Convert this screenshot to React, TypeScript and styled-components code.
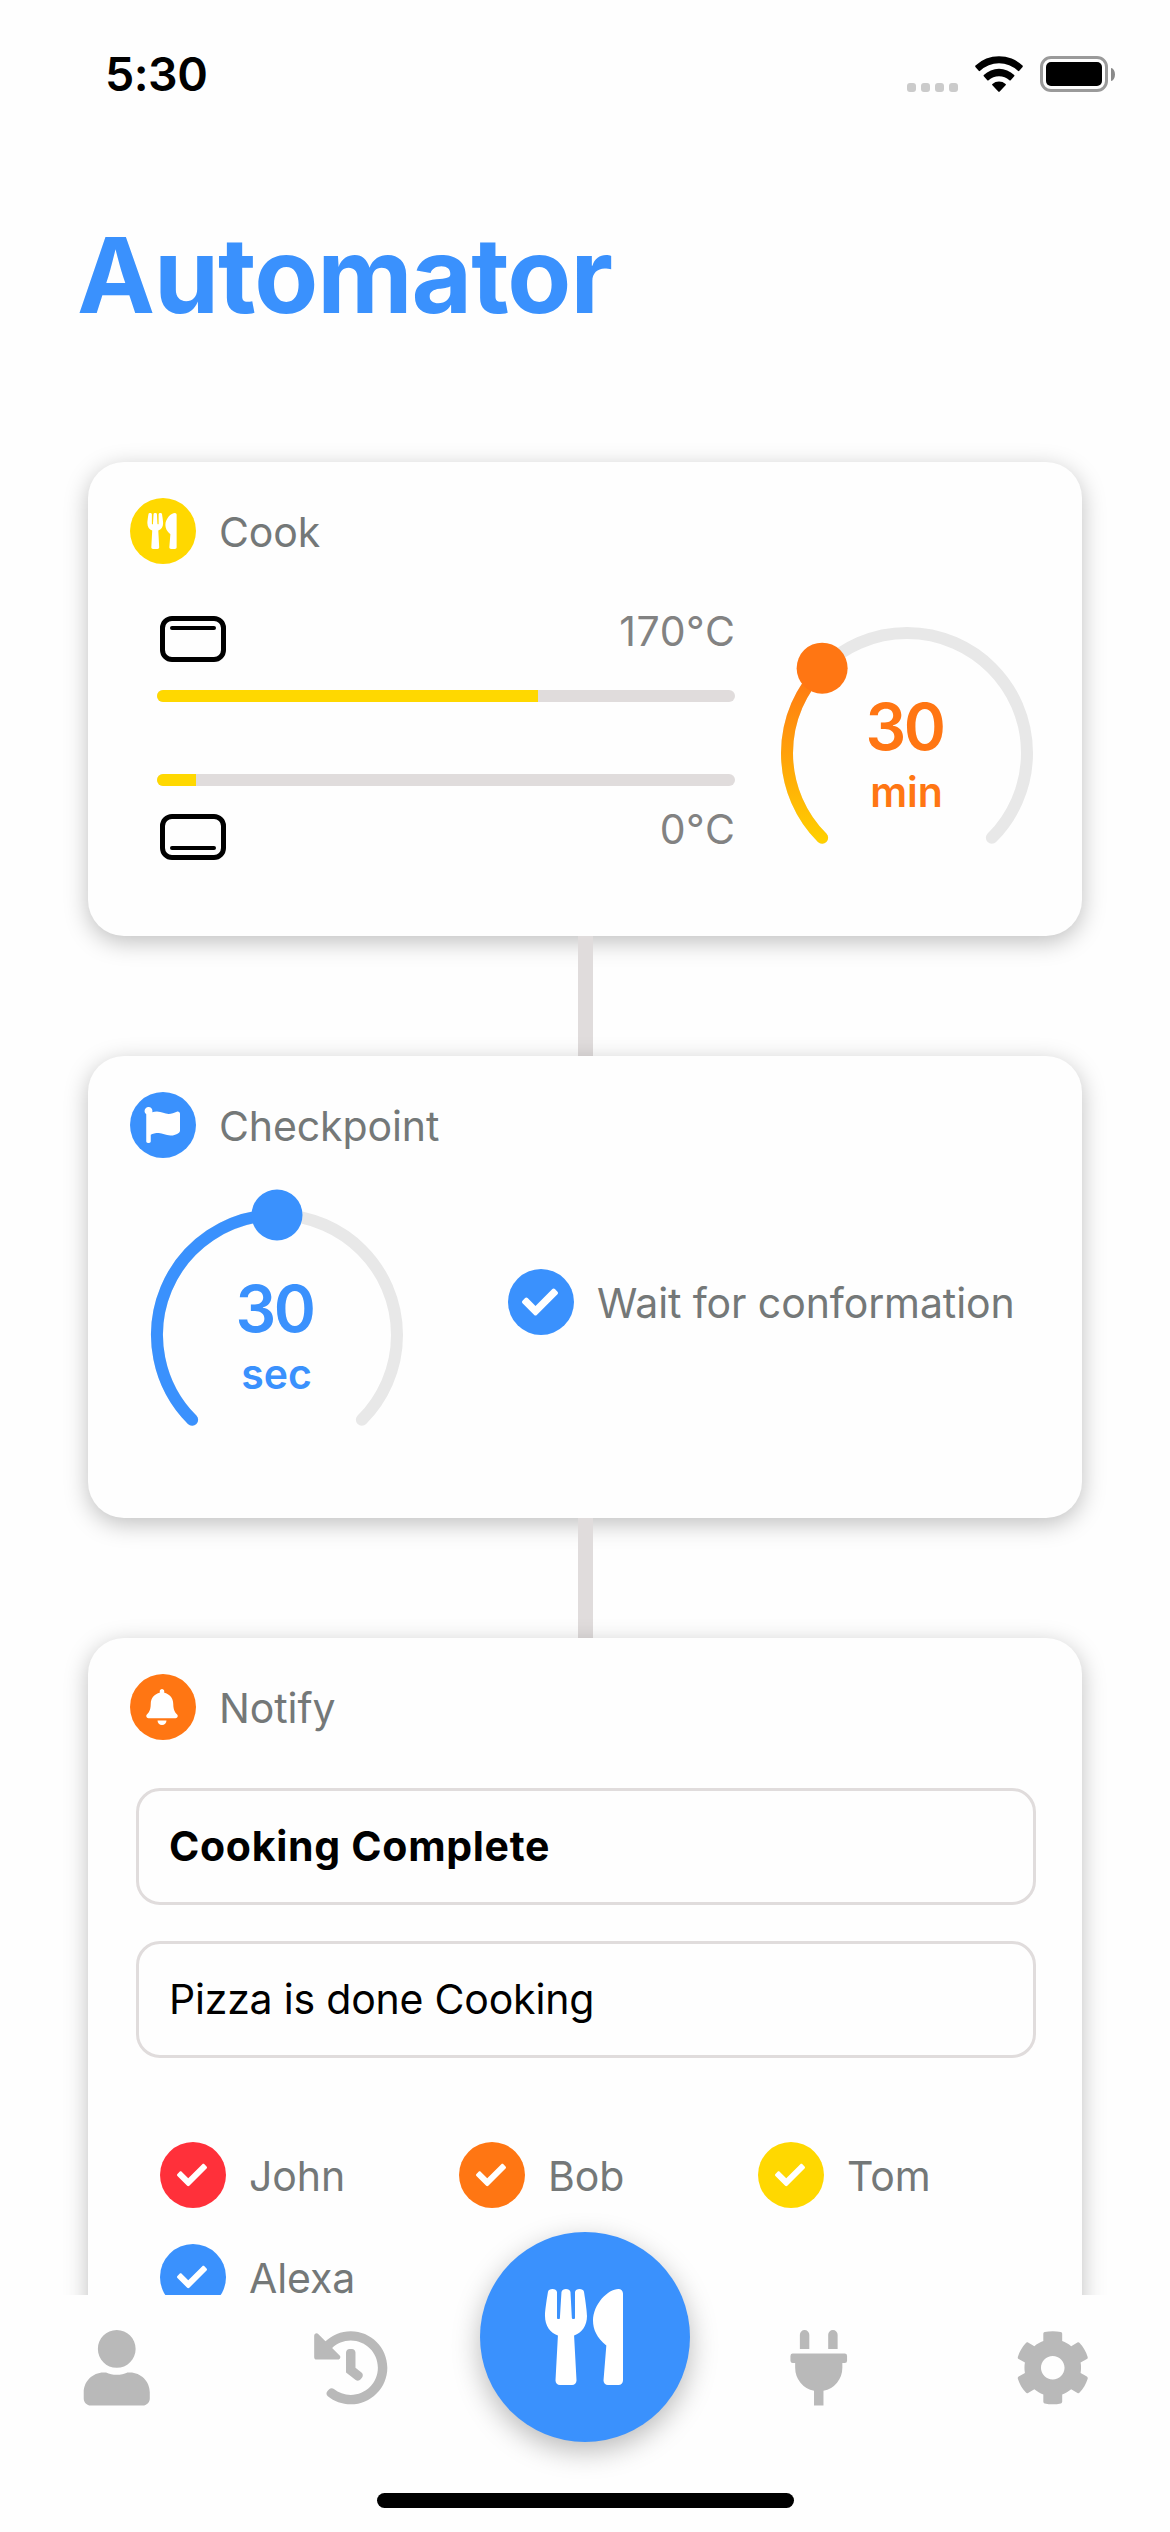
import React from "react";
import styled, { createGlobalStyle } from "styled-components";
import {
  FaBell,
  FaCheck,
  FaCog,
  FaFlag,
  FaHistory,
  FaPlug,
  FaUser,
  FaUtensils,
} from "react-icons/fa";

const colors = {
  blue: "#3a91fd",
  orange: "#ff7613",
  yellow: "#ffd800",
  red: "#ff303a",
  label: "#747878",
  value: "#828282",
  line: "#e0dcdc",
  track: "#e8e8e8",
  tab: "#b9b9b9",
};

const GlobalStyle = createGlobalStyle`
  * { box-sizing: border-box; }
  body {
    margin: 0;
    background: #fefefe;
    font-family: Inter, "Liberation Sans", sans-serif;
    overflow: hidden;
  }
  svg { display: block; }
`;

const Screen = styled.div`
  width: 1170px;
  height: 2532px;
  display: flex;
  flex-direction: column;
  background: #fefefe;
  overflow: hidden;
`;

const StatusBar = styled.header`
  flex: none;
  height: 148px;
  padding: 0 55px 0 105px;
  display: flex;
  align-items: center;
  justify-content: space-between;
`;

const Clock = styled.span`
  font-size: 46.5px;
  font-weight: 600;
  line-height: 56px;
  letter-spacing: -0.5px;
  color: #000;
`;

const StatusIcons = styled.div`
  display: flex;
  align-items: center;
  gap: 17px;
`;

const SignalDots = styled.div`
  display: flex;
  gap: 5px;
  padding-top: 26px;
`;

const SignalDot = styled.span`
  width: 9px;
  height: 9px;
  border-radius: 3px;
  background: #cbcbcb;
`;

const Battery = styled.div`
  display: flex;
  align-items: center;
  gap: 3px;
`;

const BatteryShell = styled.div`
  width: 68px;
  height: 36px;
  padding: 3px;
  border: 3px solid #9a9a9a;
  border-radius: 11px;
`;

const BatteryLevel = styled.div`
  height: 24px;
  border-radius: 5px;
  background: #000;
`;

const BatteryCap = styled.span`
  width: 4px;
  height: 13px;
  border-radius: 0 4px 4px 0 / 0 6.5px 6.5px 0;
  background: #8a8a8a;
`;

const Content = styled.main`
  flex: none;
  height: 2147px;
  overflow: hidden;
  padding: 62px 88px 0;
`;

const Title = styled.h1`
  margin: 0 0 122px -11px;
  font-size: 104.5px;
  line-height: 130px;
  font-weight: 700;
  letter-spacing: -1.05px;
  color: ${colors.blue};
`;

const Flow = styled.div`
  display: flex;
  flex-direction: column;
`;

const Card = styled.section<{ $height: number }>`
  height: ${(p) => p.$height}px;
  padding-top: 36px;
  border-radius: 36px;
  background: #fefefe;
  box-shadow: 0 6px 23px rgba(0, 0, 0, 0.25);
`;

const Connector = styled.div`
  width: 15px;
  height: 120px;
  margin-left: 490px;
  background: ${colors.line};
`;

const CardHeader = styled.div`
  display: flex;
  align-items: center;
  gap: 23px;
  padding-left: 42px;
`;

const Disc = styled.span<{ $color: string }>`
  flex: none;
  width: 66px;
  height: 66px;
  padding-right: 2px;
  border-radius: 50%;
  display: flex;
  align-items: center;
  justify-content: center;
  background: ${(p) => p.$color};
  color: #fff;
`;

const Label = styled.span`
  padding-top: 2px;
  font-size: 41px;
  line-height: 50px;
  letter-spacing: -0.1px;
  white-space: nowrap;
  color: ${colors.label};
`;

const CookBody = styled.div`
  display: flex;
  gap: 46px;
  padding: 52px 0 0 69px;
`;

const Heaters = styled.div`
  width: 578px;
  display: flex;
  flex-direction: column;
  gap: 72px;
`;

const Heater = styled.div<{ $flip?: boolean }>`
  display: flex;
  flex-direction: ${(p) => (p.$flip ? "column-reverse" : "column")};
  gap: 28px;
`;

const HeaterInfo = styled.div`
  height: 46px;
  padding: 0 0 0 3px;
  display: flex;
  justify-content: space-between;
  align-items: flex-start;
`;

const Temperature = styled.span`
  margin-right: -0.5px;
  font-size: 41px;
  line-height: 30px;
  letter-spacing: 0.6px;
  color: ${colors.value};
`;

const OvenFrame = styled.span<{ $bottom?: boolean }>`
  width: 66px;
  height: 46px;
  padding: 5px;
  border: 5px solid #000;
  border-radius: 12px;
  display: flex;
  align-items: ${(p) => (p.$bottom ? "flex-end" : "flex-start")};
`;

const OvenElement = styled.span`
  width: 100%;
  height: 4px;
  border-radius: 2px;
  background: #000;
`;

const Track = styled.div`
  height: 12px;
  border-radius: 6px;
  overflow: hidden;
  background: ${colors.line};
`;

const TrackFill = styled.div`
  height: 100%;
  background: ${colors.yellow};
`;

const DialBox = styled.div<{ $color: string; $top: number }>`
  flex: none;
  width: 252px;
  height: 252px;
  margin-top: ${(p) => p.$top}px;
  display: grid;
  color: ${(p) => p.$color};

  & > * {
    grid-area: 1 / 1;
  }
`;

const DialSvg = styled.svg`
  overflow: visible;
`;

const DialText = styled.div`
  display: flex;
  flex-direction: column;
  align-items: center;
  justify-content: center;
  gap: 8px;
  padding-top: 5px;
  font-weight: 600;
`;

const DialValue = styled.span`
  padding-right: 5px;
  font-size: 64px;
  line-height: 64px;
  letter-spacing: -2.4px;
`;

const DialUnit = styled.span`
  padding-right: 1px;
  font-size: 41px;
  line-height: 50px;
`;

const CheckpointBody = styled.div`
  display: flex;
  gap: 105px;
  padding: 51px 0 0 63px;
`;

const WaitOption = styled.div`
  height: 66px;
  margin-top: 60px;
  display: flex;
  align-items: center;
  gap: 23px;
`;

const Fields = styled.div`
  display: flex;
  flex-direction: column;
  gap: 36px;
  padding: 48px 46px 0 48px;
`;

const Field = styled.div<{ $bold?: boolean }>`
  height: 117px;
  padding: 0 30px 2px;
  border: 3px solid ${colors.line};
  border-radius: 24px;
  display: flex;
  align-items: center;
  font-size: 41px;
  font-weight: ${(p) => (p.$bold ? 700 : 400)};
  letter-spacing: ${(p) => (p.$bold ? 0.7 : -0.2)}px;
  color: #000;
`;

const Members = styled.div`
  display: grid;
  grid-template-columns: repeat(3, 299px);
  row-gap: 36px;
  padding: 84px 0 0 72px;
`;

const Member = styled.div`
  height: 66px;
  display: flex;
  align-items: center;
  gap: 23px;
`;

const BottomBar = styled.footer`
  position: relative;
  flex: none;
  height: 237px;
  background: #fefefe;
`;

const Tabs = styled.nav`
  height: 198px;
  display: flex;
`;

const Tab = styled.div`
  flex: 1;
  display: flex;
  justify-content: center;
  align-items: flex-start;
  padding: 35px 1px 0 0;
  color: ${colors.tab};

  svg {
    height: 75.5px;
    width: auto;
  }
`;

const MainTab = styled.div`
  width: 234px;
  display: flex;
  justify-content: center;
`;

const MainButton = styled.div`
  width: 210px;
  height: 210px;
  margin-top: -63px;
  padding-right: 2px;
  border-radius: 50%;
  display: flex;
  align-items: center;
  justify-content: center;
  background: ${colors.blue};
  color: #fff;
  box-shadow: 0 9px 28px rgba(0, 0, 0, 0.27);
`;

const HomeIndicator = styled.div`
  width: 417px;
  height: 15px;
  margin: 0 auto;
  border-radius: 8px;
  background: #000;
`;

const WifiIcon = () => (
  <svg width="48" height="36" viewBox="0 0 48 36" fill="#000">
    <path d="M.4 10.9a1 1 0 0 1 .1-1.3 34 34 0 0 1 47 0 1 1 0 0 1 .1 1.3l-3.3 3.9a1 1 0 0 1-1.4 0 27.4 27.4 0 0 0-37.8 0 1 1 0 0 1-1.4 0Z" />
    <path d="M8.8 20.3a1 1 0 0 1 0-1.4 22 22 0 0 1 30.4 0 1 1 0 0 1 0 1.4l-3.5 4a1 1 0 0 1-1.3 0 15.4 15.4 0 0 0-20.8 0 1 1 0 0 1-1.3 0Z" />
    <path d="M17.4 29.3a1 1 0 0 1 0-1.4 10.5 10.5 0 0 1 13.2 0 1 1 0 0 1 0 1.4l-5.9 6.3a1 1 0 0 1-1.4 0Z" />
  </svg>
);

const RADIUS = 120;
const CENTER = 126;

/** Point on the dial; 0 is the lower left end, 1 the lower right end. */
const dialPoint = (t: number) => {
  const angle = ((135 + 270 * t) * Math.PI) / 180;
  return {
    x: CENTER + RADIUS * Math.cos(angle),
    y: CENTER + RADIUS * Math.sin(angle),
  };
};

const arcPath = (from: number, to: number) => {
  const a = dialPoint(from);
  const b = dialPoint(to);
  const large = (to - from) * 270 > 180 ? 1 : 0;
  return `M${a.x} ${a.y}A${RADIUS} ${RADIUS} 0 ${large} 1 ${b.x} ${b.y}`;
};

interface DialProps {
  id: string;
  value: string;
  unit: string;
  progress: number;
  color: string;
  startColor: string;
  top: number;
}

const Dial = ({ id, value, unit, progress, color, startColor, top }: DialProps) => {
  const knob = dialPoint(progress);
  return (
    <DialBox $color={color} $top={top}>
      <DialSvg width="252" height="252" viewBox="0 0 252 252" fill="none">
        <defs>
          <linearGradient id={id} gradientUnits="userSpaceOnUse" x1="0" y1="215" x2="0" y2="45">
            <stop offset="0" stopColor={startColor} />
            <stop offset="1" stopColor={color} />
          </linearGradient>
        </defs>
        <path d={arcPath(0, 1)} stroke={colors.track} strokeWidth="12" strokeLinecap="round" />
        <path d={arcPath(0, progress)} stroke={`url(#${id})`} strokeWidth="12" strokeLinecap="round" />
        <circle cx={knob.x} cy={knob.y} r="25.5" fill={color} />
      </DialSvg>
      <DialText>
        <DialValue>{value}</DialValue>
        <DialUnit>{unit}</DialUnit>
      </DialText>
    </DialBox>
  );
};

const members = [
  { name: "John", color: colors.red },
  { name: "Bob", color: colors.orange },
  { name: "Tom", color: colors.yellow },
  { name: "Alexa", color: colors.blue },
];

export default function App() {
  return (
    <>
      <GlobalStyle />
      <Screen>
        <StatusBar>
          <Clock>5:30</Clock>
          <StatusIcons>
            <SignalDots>
              <SignalDot />
              <SignalDot />
              <SignalDot />
              <SignalDot />
            </SignalDots>
            <WifiIcon />
            <Battery>
              <BatteryShell>
                <BatteryLevel />
              </BatteryShell>
              <BatteryCap />
            </Battery>
          </StatusIcons>
        </StatusBar>

        <Content>
          <Title>Automator</Title>
          <Flow>
            <Card $height={474}>
              <CardHeader>
                <Disc $color={colors.yellow}>
                  <FaUtensils size={36} />
                </Disc>
                <Label>Cook</Label>
              </CardHeader>
              <CookBody>
                <Heaters>
                  <Heater>
                    <HeaterInfo>
                      <OvenFrame>
                        <OvenElement />
                      </OvenFrame>
                      <Temperature>170°C</Temperature>
                    </HeaterInfo>
                    <Track>
                      <TrackFill style={{ width: 381 }} />
                    </Track>
                  </Heater>
                  <Heater $flip>
                    <HeaterInfo>
                      <OvenFrame $bottom>
                        <OvenElement />
                      </OvenFrame>
                      <Temperature>0°C</Temperature>
                    </HeaterInfo>
                    <Track>
                      <TrackFill style={{ width: 39 }} />
                    </Track>
                  </Heater>
                </Heaters>
                <Dial
                  id="cook-dial"
                  value="30"
                  unit="min"
                  progress={1 / 3}
                  color={colors.orange}
                  startColor="#ffd000"
                  top={11}
                />
              </CookBody>
            </Card>

            <Connector />

            <Card $height={462}>
              <CardHeader>
                <Disc $color={colors.blue}>
                  <FaFlag size={36} />
                </Disc>
                <Label>Checkpoint</Label>
              </CardHeader>
              <CheckpointBody>
                <Dial
                  id="checkpoint-dial"
                  value="30"
                  unit="sec"
                  progress={1 / 2}
                  color={colors.blue}
                  startColor={colors.blue}
                  top={0}
                />
                <WaitOption>
                  <Disc $color={colors.blue}>
                    <FaCheck size={36} />
                  </Disc>
                  <Label>Wait for conformation</Label>
                </WaitOption>
              </CheckpointBody>
            </Card>

            <Connector />

            <Card $height={900}>
              <CardHeader>
                <Disc $color={colors.orange}>
                  <FaBell size={36} />
                </Disc>
                <Label>Notify</Label>
              </CardHeader>
              <Fields>
                <Field $bold>Cooking Complete</Field>
                <Field>Pizza is done Cooking</Field>
              </Fields>
              <Members>
                {members.map((m) => (
                  <Member key={m.name}>
                    <Disc $color={m.color}>
                      <FaCheck size={30} />
                    </Disc>
                    <Label>{m.name}</Label>
                  </Member>
                ))}
              </Members>
            </Card>
          </Flow>
        </Content>

        <BottomBar>
          <Tabs>
            <Tab>
              <FaUser />
            </Tab>
            <Tab>
              <FaHistory />
            </Tab>
            <MainTab>
              <MainButton>
                <FaUtensils size={96} />
              </MainButton>
            </MainTab>
            <Tab>
              <FaPlug />
            </Tab>
            <Tab>
              <FaCog />
            </Tab>
          </Tabs>
          <HomeIndicator />
        </BottomBar>
      </Screen>
    </>
  );
}
